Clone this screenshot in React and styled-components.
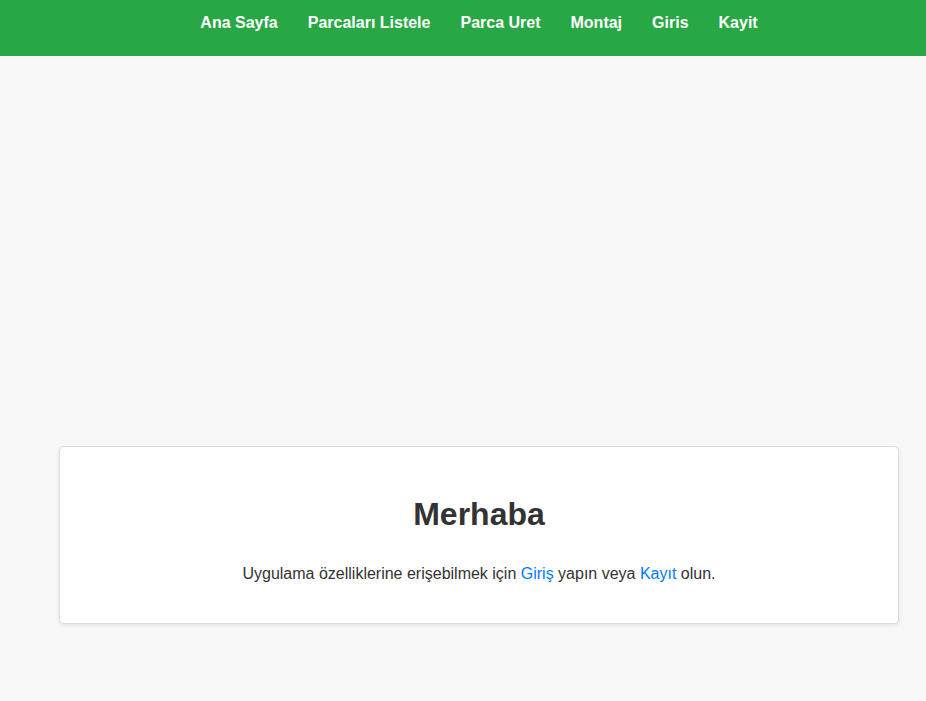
import React from "react";
import styled, { createGlobalStyle } from "styled-components";

const GlobalStyle = createGlobalStyle`
  html, body {
    margin: 0;
    padding: 0;
  }
  body {
    background: #f8f8f8;
    font-family: "Liberation Sans", Arial, sans-serif;
    color: #333;
  }
  * {
    box-sizing: border-box;
  }
`;

const Navbar = styled.nav`
  background: #28a745;
  height: 56px;
  padding-top: 14px;
`;

const NavList = styled.ul`
  list-style: none;
  margin: 0;
  padding: 0 0 0 32px;
  display: flex;
  justify-content: center;
`;

const NavItem = styled.li`
  margin: 0 15px;
`;

const NavLink = styled.a`
  color: #fff;
  font-weight: bold;
  font-size: 16px;
  text-decoration: none;
  cursor: pointer;
`;

const Main = styled.main`
  padding: 390px 0 78px 32px;
`;

const Card = styled.section`
  max-width: 840px;
  margin: 0 auto;
  background: #fff;
  border: 1px solid #dcdcdc;
  border-radius: 5px;
  box-shadow: 0 2px 4px rgba(0, 0, 0, 0.08);
  padding: 49px 20px 40px;
  text-align: center;
`;

const Title = styled.h1`
  font-size: 32px;
  font-weight: bold;
  color: #333;
  margin: 0 0 32px;
`;

const Text = styled.p`
  font-size: 16px;
  margin: 0;
  color: #333;
`;

const InlineLink = styled.a`
  color: #007bff;
  text-decoration: none;
  cursor: pointer;
`;

const links = ["Ana Sayfa", "Parcaları Listele", "Parca Uret", "Montaj", "Giris", "Kayit"];

const App = () => {
  return (
    <>
      <GlobalStyle />
      <Navbar>
        <NavList>
          {links.map((l) => (
            <NavItem key={l}>
              <NavLink>{l}</NavLink>
            </NavItem>
          ))}
        </NavList>
      </Navbar>
      <Main>
        <Card>
          <Title>Merhaba</Title>
          <Text>
            Uygulama özelliklerine erişebilmek için <InlineLink>Giriş</InlineLink> yapın veya{" "}
            <InlineLink>Kayıt</InlineLink> olun.
          </Text>
        </Card>
      </Main>
    </>
  );
};

export default App;
